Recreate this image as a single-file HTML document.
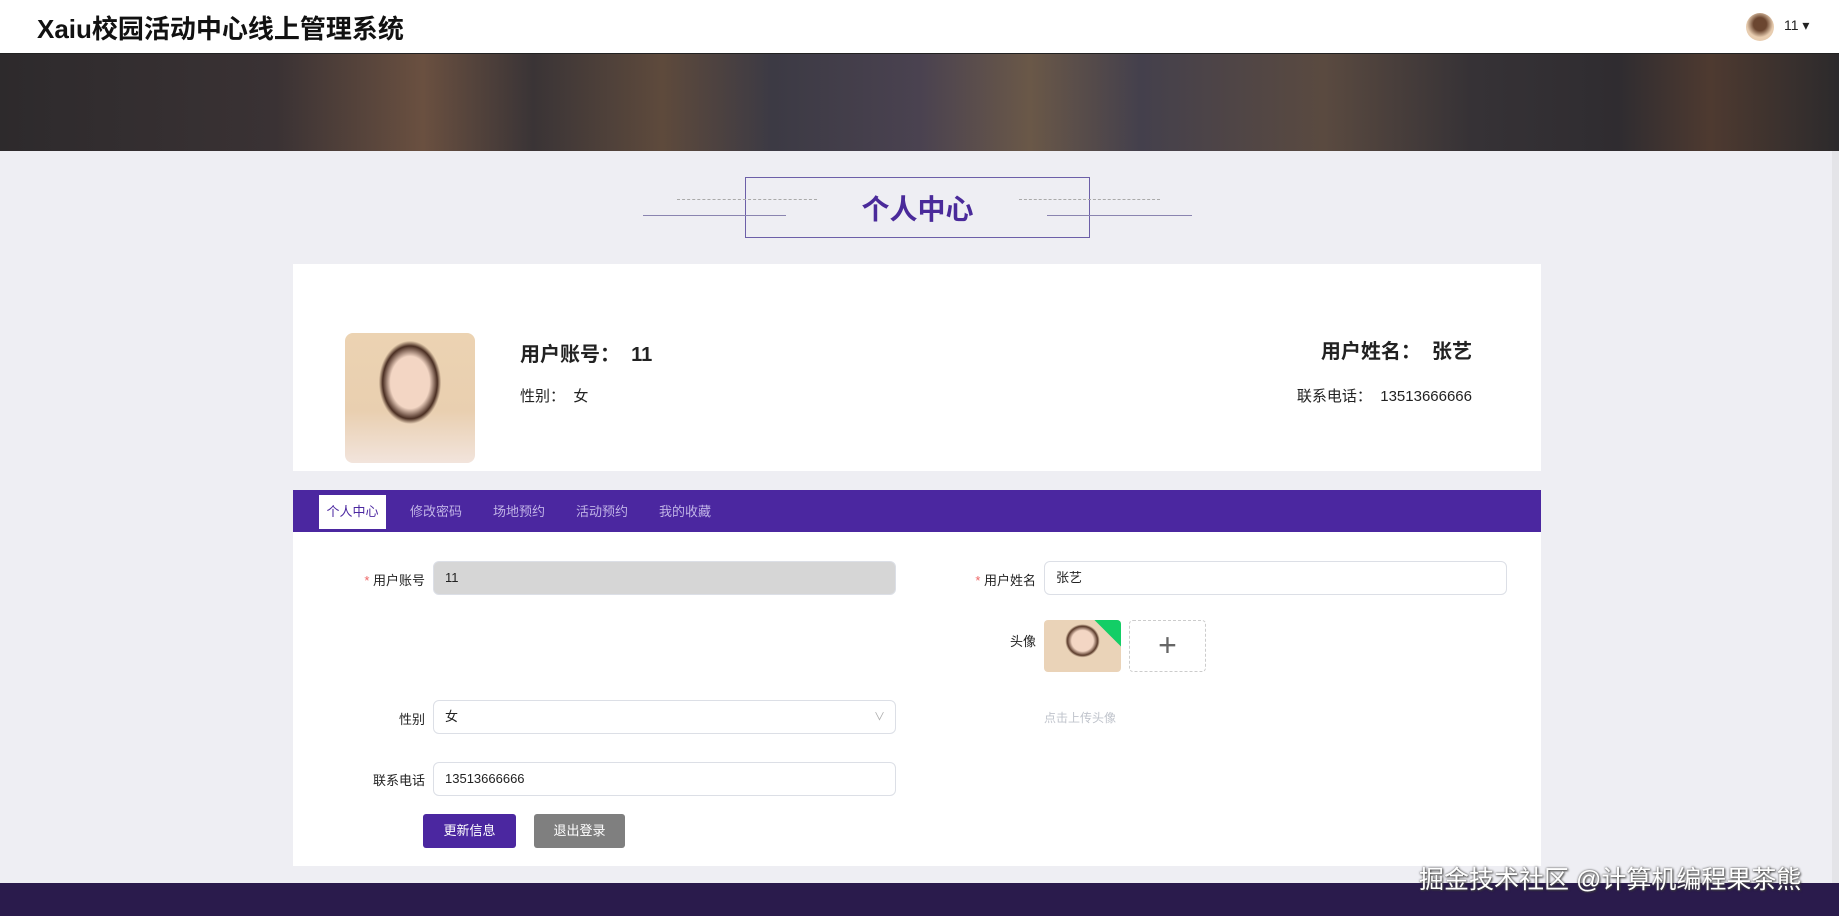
<!DOCTYPE html>
<html><head><meta charset="utf-8"><style>
*{margin:0;padding:0;box-sizing:border-box}
body{width:1839px;height:916px;overflow:hidden;background:#eeeef3;font-family:"Liberation Sans","Noto Sans CJK SC",sans-serif;position:relative;color:#222}
.a{position:absolute}
.hdr{left:0;top:0;width:1839px;height:54px;background:#fff;border-bottom:1px solid #222}
.ban{left:0;top:54px;width:1839px;height:97px;background:linear-gradient(90deg,#2d2a2c 0%,#3a3234 15%,#6a5040 23%,#3a3436 29%,#5e4a3c 36%,#3c3a44 42%,#4a4250 50%,#6a5848 56%,#44404c 62%,#5a4a40 72%,#363236 80%,#2f2c30 88%,#4e3a30 93%,#2c2a2c 100%)}
.inp{border:1px solid #dcdfe6;border-radius:6px;background:#fff;height:34px;font-size:13px;padding-left:11px;line-height:32px}
.lbl{font-size:13px;text-align:right;width:120px}
.tab{top:495px;height:34px;line-height:34px;font-size:13px;color:#c0b3e6;text-align:center;width:68px}
</style></head><body>
<div class="a hdr"></div>
<div class="a" style="left:37px;top:9px;font-size:26px;font-weight:bold;color:#111">Xaiu校园活动中心线上管理系统</div>
<div class="a" style="left:1746px;top:13px;width:28px;height:28px;border-radius:50%;background:radial-gradient(circle at 50% 40%,#6b4630 30%,#e8cdb0 60%)"></div>
<div class="a" style="left:1784px;top:17px;font-size:14px">11 ▾</div>
<div class="a" style="left:1832px;top:54px;width:7px;height:862px;background:#e4e4e8"></div>
<div class="a ban"></div>

<div class="a" style="left:745px;top:177px;width:345px;height:61px;border:1px solid #6c5fa8"></div>
<div class="a" style="left:745px;top:188px;width:345px;text-align:center;font-size:28px;font-weight:bold;color:#4a2a9a">个人中心</div>
<div class="a" style="left:643px;top:215px;width:143px;border-top:1px solid #8a84b0"></div>
<div class="a" style="left:1047px;top:215px;width:145px;border-top:1px solid #8a84b0"></div>
<div class="a" style="left:677px;top:199px;width:140px;border-top:1px dashed #aaa"></div>
<div class="a" style="left:1019px;top:199px;width:141px;border-top:1px dashed #aaa"></div>

<div class="a" style="left:293px;top:264px;width:1248px;height:207px;background:#fff"></div>
<div class="a" style="left:345px;top:333px;width:130px;height:130px;border-radius:8px;background:radial-gradient(ellipse 30% 40% at 50% 38%,#f3d6c4 50%,#4a2e22 70%,transparent 80%),linear-gradient(#ecd3b2,#e9cfb0 60%,#f2e4dc)"></div>
<div class="a" style="left:520px;top:338px;font-size:20px;font-weight:bold">用户账号：&nbsp;&nbsp;11</div>
<div class="a" style="left:520px;top:385px;font-size:15px">性别：&nbsp;&nbsp;女</div>
<div class="a" style="left:1200px;width:272px;text-align:right;top:335px;font-size:20px;font-weight:bold">用户姓名：&nbsp;&nbsp;张艺</div>
<div class="a" style="left:1200px;width:272px;text-align:right;top:385px;font-size:15px">联系电话：&nbsp;&nbsp;13513666666</div>

<div class="a" style="left:293px;top:490px;width:1248px;height:42px;background:#4b27a0"></div>
<div class="a" style="left:319px;top:495px;width:67px;height:34px;background:#fff"></div>
<div class="a tab" style="left:319px;color:#4b27a0;width:67px">个人中心</div>
<div class="a tab" style="left:402px">修改密码</div>
<div class="a tab" style="left:485px">场地预约</div>
<div class="a tab" style="left:568px">活动预约</div>
<div class="a tab" style="left:651px">我的收藏</div>

<div class="a" style="left:293px;top:532px;width:1248px;height:334px;background:#fff"></div>
<div class="a lbl" style="left:305px;top:570px"><span style="color:#e66">*</span> 用户账号</div>
<div class="a inp" style="left:433px;top:561px;width:463px;background:#d6d6d6">11</div>
<div class="a lbl" style="left:916px;top:570px"><span style="color:#e66">*</span> 用户姓名</div>
<div class="a inp" style="left:1044px;top:561px;width:463px">张艺</div>
<div class="a lbl" style="left:916px;top:631px">头像</div>
<div class="a" style="left:1044px;top:620px;width:77px;height:52px;border-radius:4px;overflow:hidden;background:radial-gradient(ellipse 28% 40% at 50% 40%,#f3d6c4 50%,#5a3a2a 70%,transparent 80%),#ead3b8"><div style="position:absolute;right:-14px;top:-6px;width:40px;height:22px;background:#13ce66;transform:rotate(45deg)"></div></div>
<div class="a" style="left:1129px;top:620px;width:77px;height:52px;border:1px dashed #ccc;border-radius:4px;text-align:center;line-height:48px;font-size:32px;color:#666;font-weight:200">+</div>
<div class="a lbl" style="left:305px;top:709px">性别</div>
<div class="a inp" style="left:433px;top:700px;width:463px">女<span style="position:absolute;right:10px;color:#aaa;font-size:11px">∨</span></div>
<div class="a" style="left:1044px;top:709px;font-size:12px;color:#c0c4cc">点击上传头像</div>
<div class="a lbl" style="left:305px;top:770px">联系电话</div>
<div class="a inp" style="left:433px;top:762px;width:463px">13513666666</div>
<div class="a" style="left:423px;top:814px;width:93px;height:34px;background:#4b27a0;color:#fff;font-size:13px;text-align:center;line-height:34px;border-radius:3px">更新信息</div>
<div class="a" style="left:534px;top:814px;width:91px;height:34px;background:#7f7f7f;color:#fff;font-size:13px;text-align:center;line-height:34px;border-radius:3px">退出登录</div>

<div class="a" style="left:0;top:883px;width:1839px;height:33px;background:#2a1b4c"></div>
<div class="a" style="left:1419px;top:860px;font-size:25px;color:#fff;text-shadow:0 0 2px #555,1px 1px 2px #333;white-space:nowrap">掘金技术社区 @计算机编程果茶熊</div>
</body></html>
